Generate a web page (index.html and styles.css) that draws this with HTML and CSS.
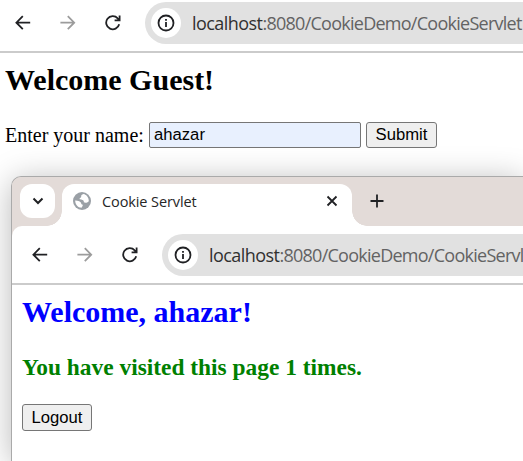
FILE: index.html
```html
<!DOCTYPE html>
<html lang="en">
<head>
<meta charset="utf-8">
<title>Cookie Servlet</title>
<link rel="stylesheet" href="styles.css">
</head>
<body>
<svg class="defs" aria-hidden="true">
  <symbol id="back" viewBox="0 0 16 16"><path d="M7.8 1.2 1.4 7.7 7.8 14.2M1.5 7.7H15.2"/></symbol>
  <symbol id="forward" viewBox="0 0 16 16"><path d="M7.8 1.2 14.2 7.7 7.8 14.2M14.1 7.7H.4"/></symbol>
  <symbol id="reload" viewBox="0 0 16 16"><path d="M14.2 9.3A6.6 6.6 0 1 1 12.7 3.3L14.3 5M14.6.4V5.4H9.6"/></symbol>
  <symbol id="info" viewBox="0 0 18 18"><circle cx="9" cy="9" r="7.5"/><path d="M9 8V13M9 5V6.8"/></symbol>
</svg>

<header class="toolbar">
  <svg class="icon"><use href="#back"/></svg>
  <svg class="icon muted"><use href="#forward"/></svg>
  <svg class="icon"><use href="#reload"/></svg>
  <div class="address">
    <span class="site"><svg class="info"><use href="#info"/></svg></span>
    <span class="url"><b>localhost</b>:8080/CookieDemo/CookieServlet</span>
  </div>
</header>
<main class="page guest">
  <h2>Welcome Guest!</h2>
  <form class="name-form">
    <label for="name">Enter your name:</label>
    <input id="name" type="text" value="ahazar">
    <button class="submit" type="button">Submit</button>
  </form>
</main>

<section class="window">
  <div class="tabstrip">
    <div class="tab-search"><svg viewBox="0 0 12 12"><path d="M1.5 3.5 6 8 10.5 3.5"/></svg></div>
    <div class="tab">
      <svg class="globe" viewBox="0 0 18 18"><circle cx="9" cy="9" r="9"/><path d="M10.5 2.1C8.7 2.6 8 3.3 8.2 4.7 8.3 5.8 6.7 5.5 6.5 6.8 6.4 8 8.8 7.4 10.1 8.2 11.6 9.2 10 10 11.5 10.6 12.8 11 14.3 10.6 15.8 9.2 15.8 5.5 13.7 2.8 10.5 2.1ZM2.2 8.4C4.6 8.3 6.4 9.1 7.6 10.2 8.7 11.3 7.7 12.2 9.2 12.5 10.2 12.7 9.9 14 8.5 15.7 4.9 15.5 2.1 12.4 2.2 8.4Z"/></svg>
      <span class="title">Cookie Servlet</span>
      <svg class="close" viewBox="0 0 12 12"><path d="M1.5 1.5 10.5 10.5M10.5 1.5 1.5 10.5"/></svg>
    </div>
    <svg class="plus" viewBox="0 0 14 14"><path d="M7 .5V13.5M.5 7H13.5"/></svg>
  </div>
  <header class="toolbar">
    <svg class="icon"><use href="#back"/></svg>
    <svg class="icon muted"><use href="#forward"/></svg>
    <svg class="icon"><use href="#reload"/></svg>
    <div class="address">
      <span class="site"><svg class="info"><use href="#info"/></svg></span>
      <span class="url"><b>localhost</b>:8080/CookieDemo/CookieServlet</span>
    </div>
  </header>
  <main class="page member">
    <h2>Welcome, ahazar!</h2>
    <h3>You have visited this page 1 times.</h3>
    <button class="logout" type="button">Logout</button>
  </main>
</section>
</body>
</html>
```
FILE: styles.css
```css
* { box-sizing: border-box; }
body {
  margin: 0;
  height: 461px;
  position: relative;
  overflow: hidden;
  background: #fff;
  color: #000;
  font-family: "Liberation Serif", serif;
}
.defs { position: absolute; width: 0; height: 0; }
svg { fill: none; stroke: #202124; stroke-width: 1.8; flex: none; }

.toolbar {
  display: flex;
  align-items: center;
  height: 53px;
  padding: 0 0 6px 15px;
  border-bottom: 2px solid #cbcbcb;
  background: #fff;
}
.icon { width: 16px; height: 16px; margin-right: 29px; }
.icon + .icon { margin-right: 28.5px; }
.icon.muted { stroke: #9c9c9c; }
.icon + .icon:not(.muted) { margin-right: 24.5px; }
.address {
  flex: 1;
  min-width: 0;
  overflow: hidden;
  display: flex;
  align-items: center;
  height: 42px;
  padding-left: 6px;
  border-radius: 21px 0 0 21px;
  background: #e1e1e1;
}
.site {
  flex: none;
  display: grid;
  place-items: center;
  width: 30px;
  height: 30px;
  margin-right: 11px;
  border-radius: 50%;
  background: #fff;
}
.info { width: 18px; height: 18px; stroke-width: 1.8; }
.url {
  font: 18px/24px "Open Sans", sans-serif;
  letter-spacing: -0.74px;
  color: #636363;
  white-space: nowrap;
}
.url b { font-weight: 400; letter-spacing: -0.55px; color: #303030; }

h2, h3 { margin: 0; font-weight: 700; white-space: nowrap; }
h2 { font-size: 30px; line-height: 34px; }
h3 { font-size: 23.4px; line-height: 28px; }
.guest { padding: 10px 5px; }
.name-form {
  display: flex;
  align-items: center;
  margin-top: 25px;
  font-size: 20px;
}
.name-form label { width: 144px; line-height: 24px; white-space: nowrap; }
input, button {
  font: 16.67px/20px "Liberation Sans", sans-serif;
  color: #000;
  border: 1px solid #767676;
  border-radius: 3px;
}
input {
  width: 212px;
  height: 26px;
  padding: 0 3px 0 4px;
  border-radius: 2px;
  background: #e8f0fe;
}
button { padding: 0; background: #efefef; }
.submit { width: 71px; height: 26px; margin-left: 5px; }

.window {
  position: absolute;
  left: 11px;
  right: 0;
  top: 176px;
  bottom: 0;
  overflow: hidden;
  border: solid #aaa;
  border-width: 1px 0 0 1px;
  border-radius: 10px 0 0 0;
  background: linear-gradient(#e3dbd8 62px, #fff 62px);
  box-shadow: 0 4px 32px rgba(0, 0, 0, .28);
}
.tabstrip {
  display: flex;
  height: 49px;
  padding: 7px 0 0 8px;
  background: #e3dbd8;
}
.tab-search {
  display: grid;
  place-items: center;
  width: 35px;
  height: 34px;
  margin-right: 7px;
  border-radius: 12px;
  background: #fff;
}
.tab-search svg { width: 12px; height: 12px; stroke-width: 2; }
.tab {
  position: relative;
  display: flex;
  align-items: center;
  width: 290px;
  height: 42px;
  padding: 0 14px 8px 11px;
  border-radius: 12px 12px 0 0;
  background: #fff;
}
.tab::before, .tab::after {
  content: "";
  position: absolute;
  bottom: 0;
  width: 15px;
  height: 15px;
}
.tab::before { left: -15px; background: radial-gradient(circle at 0 0, transparent 14.5px, #fff 15px); }
.tab::after { right: -15px; background: radial-gradient(circle at 100% 0, transparent 14.5px, #fff 15px); }
.globe { width: 18px; height: 18px; margin-right: 11px; }
.globe circle { fill: #9aa0a6; stroke: none; }
.globe path { fill: #fff; stroke: none; }
.title {
  flex: 1;
  padding-top: 2px;
  font: 14.5px/20px "Open Sans", sans-serif;
  letter-spacing: -0.1px;
  color: #262626;
  white-space: nowrap;
}
.close { width: 12px; height: 12px; }
.plus { width: 14px; height: 14px; margin: 10px 0 0 18px; }
.window .toolbar {
  height: 59px;
  padding: 6px 0 6px 20px;
  border-radius: 10px 0 0 0;
}
.window .address { height: 42px; }
.member { padding: 10px 10px; }
.member h2 { color: #0000ff; }
.member h3 { margin-top: 24px; color: #008000; }
.logout { display: block; width: 70px; height: 27px; margin-top: 23px; }
```
